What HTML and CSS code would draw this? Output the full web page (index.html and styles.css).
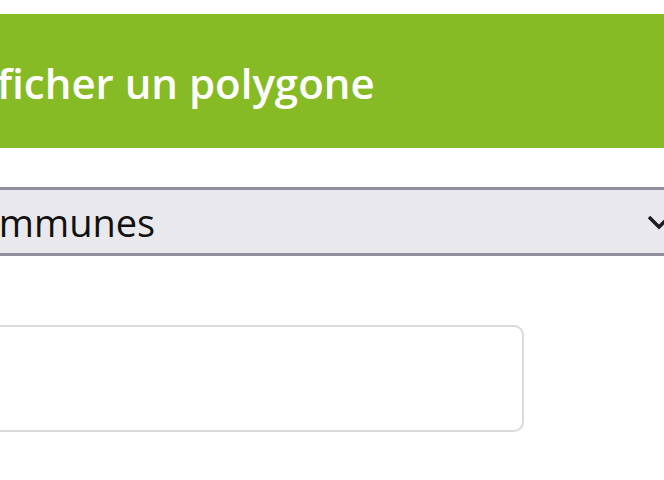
FILE: index.html
```html
<!DOCTYPE html>
<html lang="fr">
<head>
    <meta charset="UTF-8">
    <meta name="viewport" content="width=device-width, initial-scale=1.0">
    <title>Afficher un polygone</title>
    <link rel="stylesheet" href="styles.css">
</head>
<body>
    <div class="page">
        <div class="panel-title">
            <h2>Afficher un polygone</h2>
        </div>

        <div class="select-wrap">
            <select class="layer-select">
                <option>Communes</option>
                <option>Départements</option>
                <option>Régions</option>
            </select>
            <svg class="chevron" width="26" height="18" viewBox="0 0 26 18">
                <polyline points="2,3 12,13 22,3" fill="none" stroke="#1c1b22" stroke-width="3.4"/>
            </svg>
        </div>

        <input class="search-input" type="text">
    </div>
</body>
</html>
```

FILE: styles.css
```css
* {
    margin: 0;
    padding: 0;
    box-sizing: border-box;
}

html, body {
    background: white;
    overflow: hidden;
}

body {
    font-family: 'Open Sans', 'DejaVu Sans', sans-serif;
}

.page {
    margin-left: -56px;
    width: 800px;
    padding-top: 14px;
}

.panel-title {
    background: #86bb25;
    height: 134px;
    display: flex;
    align-items: center;
    padding-left: 10px;
}

.panel-title h2 {
    color: white;
    font-size: 42px;
    font-weight: 600;
    margin-top: 2px;
}

.select-wrap {
    position: relative;
    margin-top: 39px;
}

.layer-select {
    appearance: none;
    -webkit-appearance: none;
    display: block;
    width: 100%;
    height: 69px;
    background: #e9e9ed;
    border: none;
    border-top: 3px solid #8f8f9d;
    border-bottom: 3px solid #8f8f9d;
    font-family: inherit;
    font-size: 38px;
    color: #111;
    padding-left: 8px;
}

.chevron {
    position: absolute;
    left: 703px;
    top: 27px;
}

.search-input {
    display: block;
    margin-top: 69px;
    width: 580px;
    height: 107px;
    border: 2px solid #dadada;
    border-radius: 10px;
    background: white;
}
```
